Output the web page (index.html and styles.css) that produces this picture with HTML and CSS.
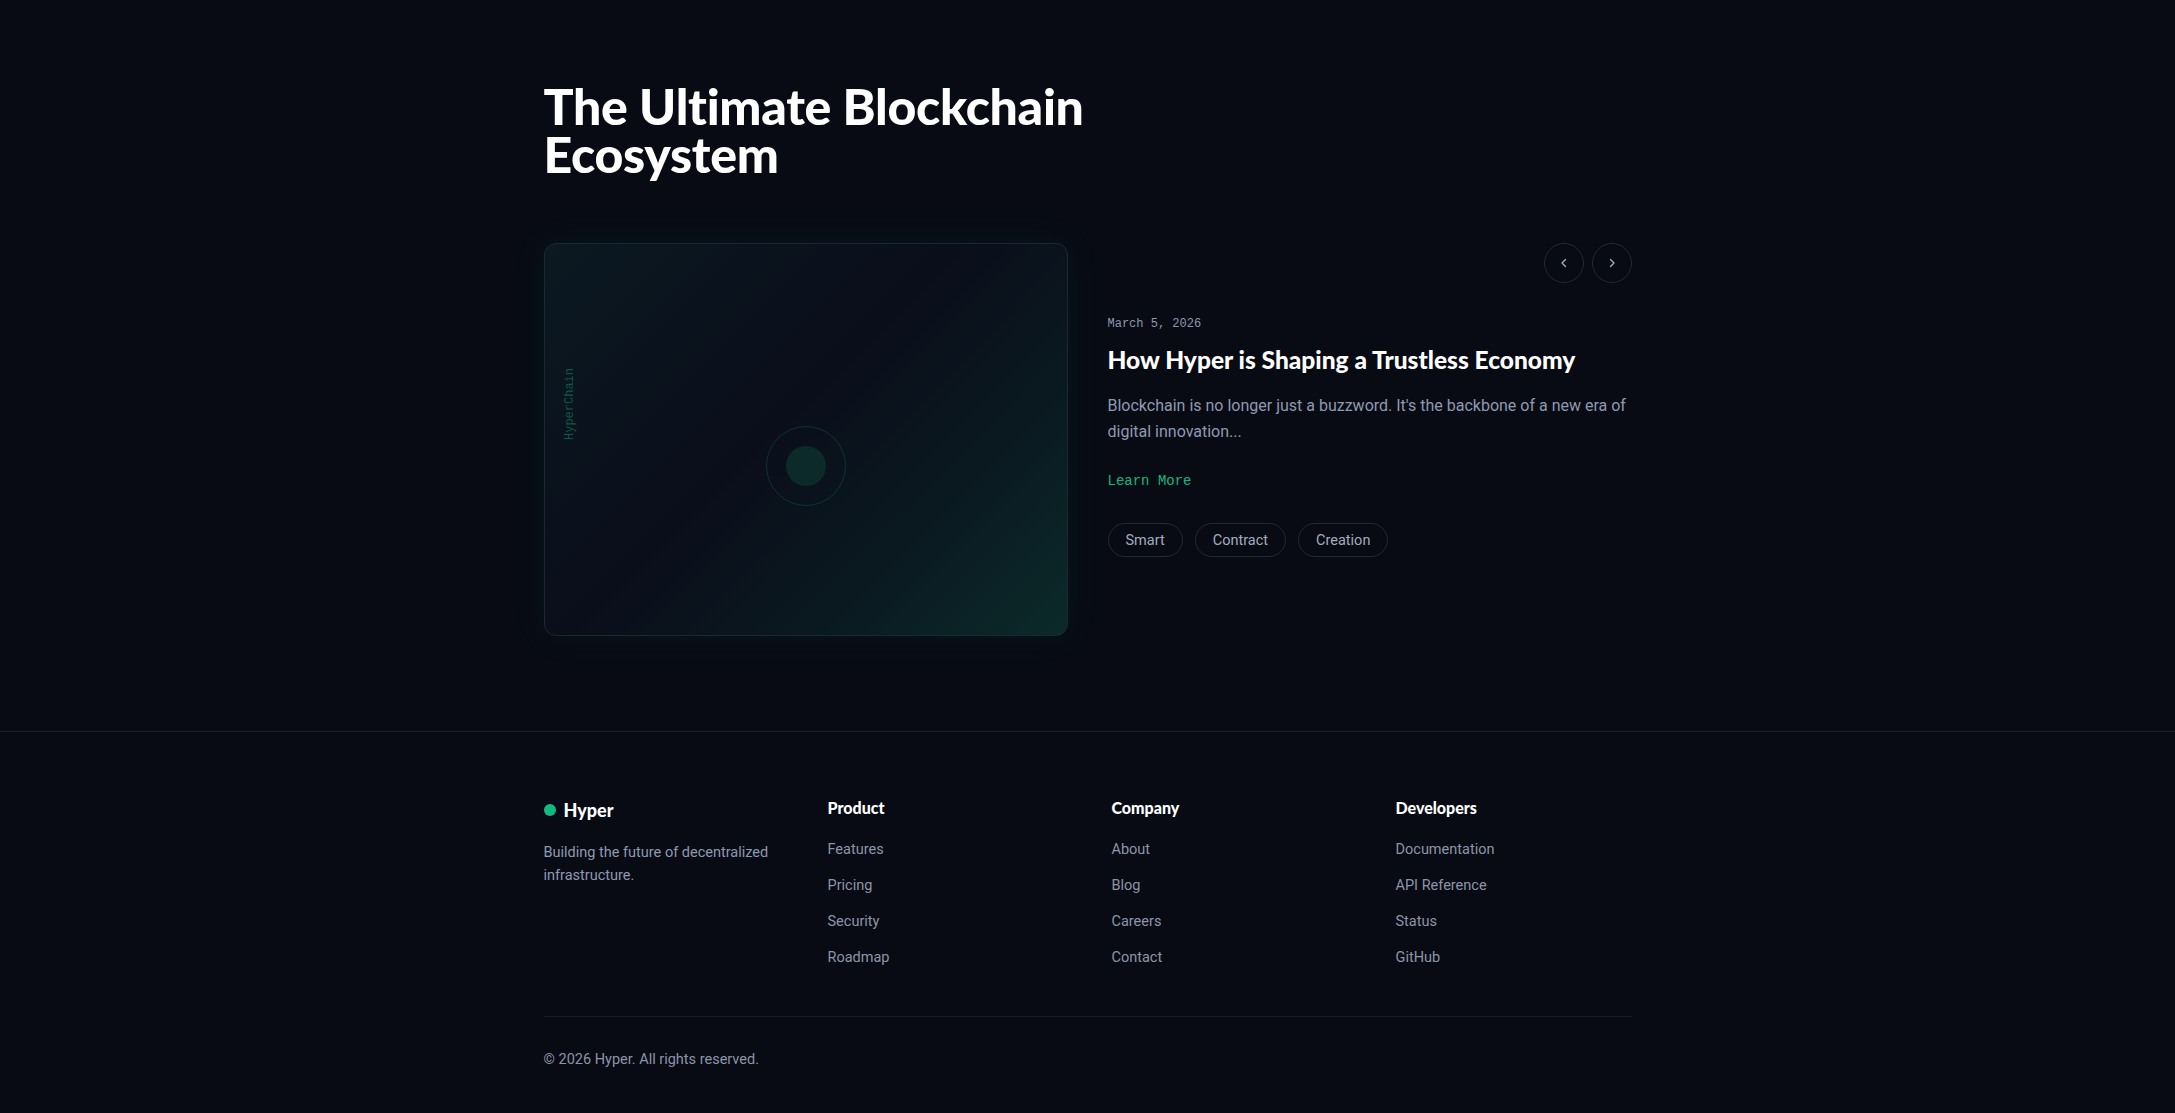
FILE: index.html
```html
<!DOCTYPE html>
<html lang="en">
<head>
<meta charset="utf-8">
<title>Hyper – The Ultimate Blockchain Ecosystem</title>
<link rel="stylesheet" href="styles.css">
</head>
<body>
<main class="blog">
  <div class="container">
    <h1 class="blog-title">The Ultimate Blockchain<br>Ecosystem</h1>
    <div class="blog-grid">
      <div class="visual">
        <span class="visual-label">HyperChain</span>
        <span class="visual-ring"><span class="visual-dot"></span></span>
      </div>
      <div class="post">
        <div class="post-nav">
          <button class="nav-btn" aria-label="Previous">
            <svg viewBox="0 0 16 16" width="16" height="16"><path d="M9.5 4.5 6 8l3.5 3.5" fill="none" stroke="currentColor" stroke-width="1.4" stroke-linecap="round" stroke-linejoin="round"/></svg>
          </button>
          <button class="nav-btn" aria-label="Next">
            <svg viewBox="0 0 16 16" width="16" height="16"><path d="M6.5 4.5 10 8l-3.5 3.5" fill="none" stroke="currentColor" stroke-width="1.4" stroke-linecap="round" stroke-linejoin="round"/></svg>
          </button>
        </div>
        <div class="post-date">March 5, 2026</div>
        <h2 class="post-title">How Hyper is Shaping a Trustless Economy</h2>
        <p class="post-excerpt">Blockchain is no longer just a buzzword. It's the backbone of a new era of digital innovation...</p>
        <a class="post-link" href="#">Learn More</a>
        <div class="tags">
          <span class="tag">Smart</span>
          <span class="tag">Contract</span>
          <span class="tag">Creation</span>
        </div>
      </div>
    </div>
  </div>
</main>
<footer class="footer">
  <div class="container">
    <div class="footer-grid">
      <div class="footer-brand">
        <div class="brand"><span class="brand-dot"></span><span class="brand-name">Hyper</span></div>
        <p class="brand-desc">Building the future of decentralized infrastructure.</p>
      </div>
      <div class="footer-col">
        <h4>Product</h4>
        <ul>
          <li><a href="#">Features</a></li>
          <li><a href="#">Pricing</a></li>
          <li><a href="#">Security</a></li>
          <li><a href="#">Roadmap</a></li>
        </ul>
      </div>
      <div class="footer-col">
        <h4>Company</h4>
        <ul>
          <li><a href="#">About</a></li>
          <li><a href="#">Blog</a></li>
          <li><a href="#">Careers</a></li>
          <li><a href="#">Contact</a></li>
        </ul>
      </div>
      <div class="footer-col">
        <h4>Developers</h4>
        <ul>
          <li><a href="#">Documentation</a></li>
          <li><a href="#">API Reference</a></li>
          <li><a href="#">Status</a></li>
          <li><a href="#">GitHub</a></li>
        </ul>
      </div>
    </div>
    <div class="footer-bottom">© 2026 Hyper. All rights reserved.</div>
  </div>
</footer>
</body>
</html>
```
FILE: styles.css
```css
* { box-sizing: border-box; }
html, body { margin: 0; padding: 0; }
body {
  background: #080b14;
  color: #fff;
  font-family: Roboto, Inter, "Noto Sans", sans-serif;
}
a { text-decoration: none; color: inherit; }
.container {
  width: 1088px;
  margin: 0 auto;
}
.blog { padding: 82px 0 95px; }
.blog-title {
  margin: 0 0 65px;
  font-family: Lato, "Noto Sans", sans-serif;
  font-weight: 900;
  font-size: 50px;
  line-height: 48px;
  letter-spacing: -0.3px;
  color: #fff;
}
.blog-grid {
  display: grid;
  grid-template-columns: 1fr 1fr;
  gap: 40px;
}
.visual {
  position: relative;
  aspect-ratio: 4 / 3;
  border: 1px solid #1b2732;
  border-radius: 12px;
  background: linear-gradient(135deg, #0b1921 0%, #0a0e1a 45%, #0a1920 72%, #0b2a2a 100%);
  box-shadow: 0 0 36px rgba(16, 185, 129, 0.07);
  overflow: hidden;
}
.visual-label {
  position: absolute;
  left: 19px;
  top: 50%;
  transform-origin: 0 0;
  transform: rotate(-90deg);
  font-family: "Liberation Mono", monospace;
  font-size: 12px;
  line-height: 12px;
  color: rgba(16, 185, 129, 0.42);
  white-space: nowrap;
}
.visual-ring {
  position: absolute;
  left: 50%;
  top: calc(50% + 26px);
  width: 80px;
  height: 80px;
  margin: -40px 0 0 -40px;
  border: 1px solid rgba(16, 185, 129, 0.2);
  border-radius: 50%;
  display: flex;
  align-items: center;
  justify-content: center;
}
.visual-dot {
  width: 40px;
  height: 40px;
  border-radius: 50%;
  background: #0c2a2a;
}
.post { display: flex; flex-direction: column; align-items: flex-start; }
.post-nav {
  align-self: flex-end;
  display: flex;
  gap: 8px;
  margin-bottom: 33px;
}
.nav-btn {
  width: 40px;
  height: 40px;
  border-radius: 50%;
  border: 1px solid #232836;
  background: transparent;
  color: #a3acbd;
  display: flex;
  align-items: center;
  justify-content: center;
  padding: 0;
}
.post-date {
  font-family: "Liberation Mono", monospace;
  font-size: 12px;
  line-height: 16px;
  color: #8d97aa;
}
.post-title {
  margin: 12px 0 0;
  font-family: Lato, "Noto Sans", sans-serif;
  font-weight: 900;
  font-size: 24.5px;
  line-height: 31px;
  letter-spacing: 0;
  color: #fff;
}
.post-excerpt {
  margin: 18px 0 0;
  font-size: 16px;
  line-height: 26px;
  color: #8e9ab0;
}
.post-link {
  margin-top: 26px;
  font-family: "Liberation Mono", monospace;
  font-size: 14px;
  line-height: 20px;
  color: #10b981;
}
.tags {
  display: flex;
  gap: 12px;
  margin-top: 32px;
}
.tag {
  height: 34px;
  padding: 0 17px;
  border: 1px solid #232836;
  border-radius: 999px;
  display: flex;
  align-items: center;
  font-size: 14.5px;
  color: #a1abbd;
}
.footer {
  border-top: 1px solid #1a1e29;
  padding: 64px 0 40px;
}
.footer-grid {
  display: grid;
  grid-template-columns: repeat(4, 1fr);
  gap: 48px;
}
.brand { display: flex; align-items: center; gap: 8px; height: 28px; margin-top: 0; }
.brand-dot { width: 12px; height: 12px; border-radius: 50%; background: #10b981; }
.brand-name {
  font-family: Lato, "Noto Sans", sans-serif;
  font-weight: 900;
  font-size: 18px;
  color: #fff;
}
.brand-desc {
  margin: 17px 0 0;
  font-size: 14.5px;
  line-height: 23px;
  color: #8e9ab0;
}
.footer-col h4 {
  margin: 0 0 18px;
  font-family: Lato, "Noto Sans", sans-serif;
  font-weight: 900;
  font-size: 16px;
  line-height: 24px;
  color: #fff;
}
.footer-col ul {
  list-style: none;
  margin: 0;
  padding: 0;
  display: flex;
  flex-direction: column;
  gap: 12px;
}
.footer-col li { font-size: 14.5px; line-height: 24px; color: #8c95a8; }
.footer-bottom {
  margin-top: 46px;
  border-top: 1px solid #1a1e29;
  padding-top: 33px;
  font-size: 14.5px;
  line-height: 20px;
  color: #8c95a8;
}
```
